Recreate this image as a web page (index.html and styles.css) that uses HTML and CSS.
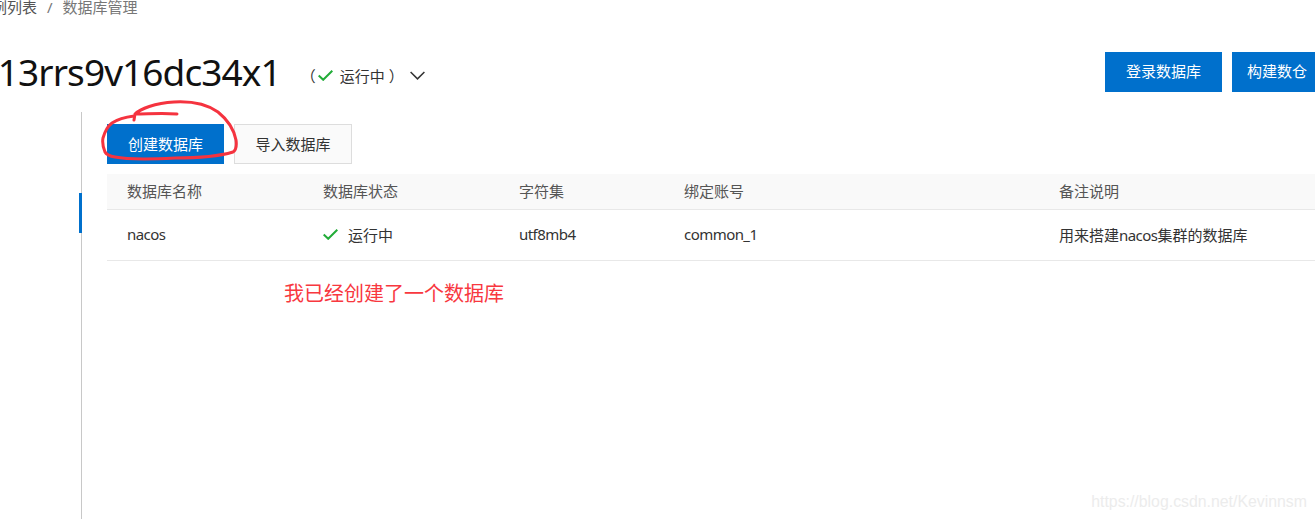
FILE: index.html
```html
<!DOCTYPE html>
<html lang="zh-CN">
<head>
    <meta charset="UTF-8">
    <title>数据库管理</title>
    <link rel="stylesheet" href="styles.css">
</head>
<body>
    <div class="page">
        <div class="breadcrumb">
            <span>实例列表</span>
            <span class="breadcrumb-sep">/</span>
            <span>数据库管理</span>
        </div>

        <div class="page-head">
            <h1 class="instance-id">rm-bp13rrs9v16dc34x1</h1>
            <div class="instance-status">
                <span class="paren-left">（</span>
                <svg class="check" width="15" height="11" viewBox="0 0 15 11">
                    <path d="M.7 5.5l4.5 4.3L14.3.7" fill="none" stroke="#22ac38" stroke-width="2"/>
                </svg>
                <span>运行中</span>
                <span class="paren-right">）</span>
                <svg class="chevron" width="15" height="9" viewBox="0 0 15 9">
                    <path d="M.6 1l6.9 6.9L14.4 1" fill="none" stroke="#333" stroke-width="1.5"/>
                </svg>
            </div>
            <div class="head-actions">
                <button class="btn btn-primary">登录数据库</button>
                <button class="btn btn-primary btn-narrow">构建数仓</button>
            </div>
        </div>

        <div class="content">
            <div class="side">
                <div class="side-mark"></div>
            </div>
            <div class="main">
                <div class="toolbar">
                    <button class="btn btn-primary">创建数据库</button>
                    <button class="btn btn-default">导入数据库</button>
                </div>
                <table class="db-table">
                    <thead>
                        <tr>
                            <th class="col-name">数据库名称</th>
                            <th class="col-status">数据库状态</th>
                            <th class="col-charset">字符集</th>
                            <th class="col-account">绑定账号</th>
                            <th>备注说明</th>
                        </tr>
                    </thead>
                    <tbody>
                        <tr>
                            <td><span class="latin">nacos</span></td>
                            <td>
                                <span class="row-status">
                                    <svg width="15" height="11" viewBox="0 0 15 11">
                                        <path d="M.7 5.5l4.5 4.3L14.3.7" fill="none" stroke="#22ac38" stroke-width="2"/>
                                    </svg>
                                    运行中
                                </span>
                            </td>
                            <td><span class="latin">utf8mb4</span></td>
                            <td><span class="latin">common_1</span></td>
                            <td>用来搭建<span class="latin">nacos</span>集群的数据库</td>
                        </tr>
                    </tbody>
                </table>
                <p class="note">我已经创建了一个数据库</p>
            </div>
        </div>

        <!-- hand drawn circle around the create button -->
        <svg class="scribble" width="150" height="75" viewBox="0 0 150 75">
            <path d="M77 14 C62 13 48 14 35 14 L34 20 L35 14 C40 9 55 3 74 2 C92 1 108 5 118 12 C128 20 134 30 136 40 C137 47 136 50 133 52 C120 56 95 58 75 58 C55 59 30 60 15 57 C9 56 6 54 5 52 C3 47 2 43 3 38 C5 31 8 26 12 23 C18 19 26 17 34 16" fill="none" stroke="#f5333f" stroke-width="3" stroke-linecap="round" stroke-linejoin="round"/>
        </svg>
        <div class="watermark">https://blog.csdn.net/Kevinnsm</div>
    </div>
</body>
</html>
```

FILE: styles.css
```css
* {
    margin: 0;
    padding: 0;
    box-sizing: border-box;
}

body {
    font-family: "Noto Sans", "Noto Sans CJK SC", sans-serif;
    background: #ffffff;
    color: #333333;
    font-size: 15px;
}

.page {
    position: relative;
    width: 1315px;
    height: 519px;
    overflow: hidden;
}

.breadcrumb {
    display: flex;
    align-items: center;
    height: 14px;
    margin-left: -23px;
    color: #777777;
    line-height: 14px;
}

.breadcrumb span:first-child {
    color: #555555;
}

.breadcrumb-sep {
    margin: 0 10px;
}

.page-head {
    display: flex;
    align-items: center;
    height: 40px;
    margin-top: 38px;
    margin-left: -105px;
    margin-right: -7px;
}

.instance-id {
    margin-bottom: 2px;
    font-size: 37px;
    font-weight: 400;
    letter-spacing: -0.9px;
    color: #111111;
    white-space: nowrap;
}

.instance-status {
    display: flex;
    align-items: center;
    margin: 6px 0 0 20px;
    color: #333333;
}

.paren-left {
    width: 15px;
}

.check {
    margin: 0 7px 0 2px;
}

.paren-right {
    width: 15px;
    margin: 0 6px 0 4px;
}

.head-actions {
    display: flex;
    gap: 10px;
    margin-left: auto;
}

.btn {
    height: 40px;
    padding: 0 20px 2px;
    font-family: inherit;
    font-size: 15px;
    white-space: nowrap;
    border: 1px solid transparent;
}

.head-actions .btn {
    padding-bottom: 4px;
}

.head-actions .btn-narrow {
    padding-left: 14px;
    padding-right: 14px;
}

.btn-primary {
    background: #0070cc;
    color: #ffffff;
}

.btn-default {
    min-width: 118px;
    background: #fafafa;
    border-color: #dddddd;
    color: #333333;
}

.content {
    display: flex;
    margin-top: 20px;
    height: 407px;
}

.side {
    flex: 0 0 82px;
    border-right: 1px solid #c8c8c8;
}

.side-mark {
    width: 3px;
    height: 40px;
    margin: 81px -1px 0 auto;
    background: #0070cc;
}

.main {
    flex: 1;
    min-width: 0;
    padding: 12px 0 0 25px;
}

.toolbar {
    display: flex;
    gap: 10px;
}

.db-table {
    width: 1208px;
    margin-top: 10px;
    border-collapse: separate;
    border-spacing: 0;
    table-layout: fixed;
}

.db-table th,
.db-table td {
    padding: 0 20px 2px;
    text-align: left;
    font-weight: 400;
    white-space: nowrap;
}

.db-table th {
    height: 36px;
    background: #f9f9f9;
    border-bottom: 1px solid #e8e8e8;
    color: #555555;
}

.db-table td {
    height: 51px;
    border-bottom: 1px solid #e8e8e8;
    color: #333333;
}

.latin {
    letter-spacing: -0.55px;
}

.col-name,
.col-status {
    width: 196px;
}

.col-charset {
    width: 165px;
}

.col-account {
    width: 375px;
}

.row-status {
    display: flex;
    align-items: center;
    gap: 10px;
}

.note {
    margin: 18px 0 0 177px;
    font-size: 20px;
    line-height: 29px;
    color: #f8383f;
}

.scribble {
    position: absolute;
    left: 100px;
    top: 100px;
}

.watermark {
    position: absolute;
    right: 8px;
    bottom: 8px;
    font-family: "Liberation Sans", sans-serif;
    font-size: 15.85px;
    color: #ececec;
}
```
